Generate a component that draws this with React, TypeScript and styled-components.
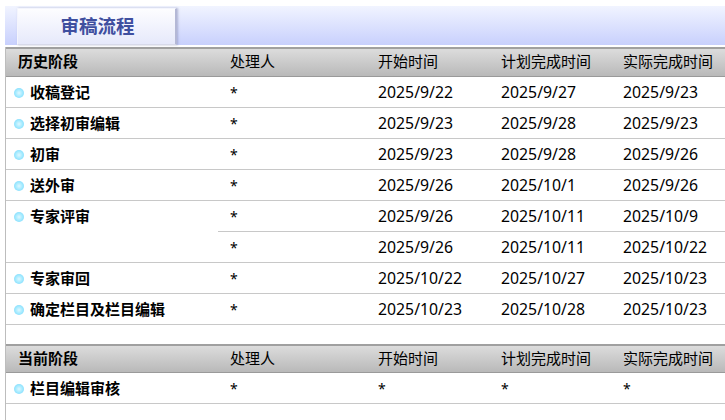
import styled, { createGlobalStyle } from 'styled-components';

const GlobalStyle = createGlobalStyle`
    html, body {
        margin: 0;
        padding: 0;
        background: #fff;
        overflow: hidden;
    }
    body {
        font-family: "Noto Sans", "Noto Sans CJK SC", sans-serif;
        font-size: 15px;
        color: #000;
    }
`;

const Page = styled.div`
    width: 725px;
    height: 420px;
    padding: 6px 0 0 5px;
    box-sizing: border-box;
    overflow: hidden;
`;

const TabBar = styled.div`
    height: 39px;
    padding-left: 12px;
    display: flex;
    align-items: flex-end;
    background: linear-gradient(#f1f4ff, #c8d0fd);
`;

const Tab = styled.div`
    width: 160px;
    height: 37px;
    box-sizing: border-box;
    padding: 0 0 3px 2px;
    display: flex;
    align-items: center;
    justify-content: center;
    background: linear-gradient(#fdfdff, #e6e9fb);
    border: 1px solid #f4f5fd;
    border-right: 2px solid #b4b8d6;
    border-bottom: 1px solid #d8daea;
    box-shadow: 1px 0 2px rgba(120, 125, 170, 0.5);
    font-size: 18.5px;
    font-weight: 700;
    color: #3f4f9f;
`;

const Body = styled.div`
    margin-top: 2px;
    height: 373px;
    border-left: 1px solid #bdbdbd;
`;

const Table = styled.table`
    width: 720px;
    table-layout: fixed;
    border-collapse: separate;
    border-spacing: 0;
`;

const HeadStage = styled.th<{ $height: number }>`
    height: ${(p) => p.$height}px;
    box-sizing: border-box;
    padding: 0 0 4px 12px;
    text-align: left;
    font-size: 15px;
    font-weight: 700;
    background: linear-gradient(#dcdcdc, #b9b9b9);
    border-top: 2px solid #a0a0a0;
    border-bottom: 1px solid #9a9a9a;
`;

const HeadCell = styled(HeadStage)`
    font-weight: 400;
    white-space: nowrap;
`;

const Stage = styled.td`
    box-sizing: border-box;
    padding: 0 0 0 8px;
    border-bottom: 1px solid #c8c8c8;
    vertical-align: top;
    line-height: 30px;
    font-weight: 700;
    white-space: nowrap;
`;

const Cell = styled.td`
    height: 31px;
    box-sizing: border-box;
    padding: 0 0 1px 12px;
    border-bottom: 1px solid #c8c8c8;
    font-size: 15.8px;
    white-space: nowrap;
`;

const Star = styled(Cell)`
    font-size: 14px;
    padding-bottom: 0;
`;

const Dot = styled.span`
    display: inline-block;
    width: 10px;
    height: 10px;
    margin-right: 6px;
    border-radius: 50%;
    vertical-align: 0;
    background: radial-gradient(circle, #dff8ff 0%, #9ce8ff 55%, #74cff8 100%);
`;

const Gap = styled.div`
    height: 19px;
`;

const columns = ['处理人', '开始时间', '计划完成时间', '实际完成时间'];

type Group = { stage: string; rows: string[][] };

const history: Group[] = [
    { stage: '收稿登记', rows: [['2025/9/22', '2025/9/27', '2025/9/23']] },
    { stage: '选择初审编辑', rows: [['2025/9/23', '2025/9/28', '2025/9/23']] },
    { stage: '初审', rows: [['2025/9/23', '2025/9/28', '2025/9/26']] },
    { stage: '送外审', rows: [['2025/9/26', '2025/10/1', '2025/9/26']] },
    {
        stage: '专家评审',
        rows: [
            ['2025/9/26', '2025/10/11', '2025/10/9'],
            ['2025/9/26', '2025/10/11', '2025/10/22'],
        ],
    },
    { stage: '专家审回', rows: [['2025/10/22', '2025/10/27', '2025/10/23']] },
    { stage: '确定栏目及栏目编辑', rows: [['2025/10/23', '2025/10/28', '2025/10/23']] },
];

const current: Group[] = [{ stage: '栏目编辑审核', rows: [['*', '*', '*']] }];

const StageTable = ({ title, groups, headHeight }: { title: string; groups: Group[]; headHeight: number }) => (
    <Table>
        <colgroup>
            <col width={212} />
            <col width={148} />
            <col width={123} />
            <col width={122} />
            <col width={115} />
        </colgroup>
        <thead>
            <tr>
                <HeadStage $height={headHeight}>{title}</HeadStage>
                {columns.map((c) => (
                    <HeadCell key={c} $height={headHeight}>
                        {c}
                    </HeadCell>
                ))}
            </tr>
        </thead>
        <tbody>
            {groups.map((g) =>
                g.rows.map((r, i) => (
                    <tr key={g.stage + i}>
                        {i === 0 && (
                            <Stage rowSpan={g.rows.length}>
                                <Dot />
                                {g.stage}
                            </Stage>
                        )}
                        <Star>*</Star>
                        {r.map((v, j) =>
                            v === '*' ? <Star key={j}>{v}</Star> : <Cell key={j}>{v}</Cell>
                        )}
                    </tr>
                ))
            )}
        </tbody>
    </Table>
);

const App = () => (
    <Page>
        <GlobalStyle />
        <TabBar>
            <Tab>审稿流程</Tab>
        </TabBar>
        <Body>
            <StageTable title="历史阶段" groups={history} headHeight={30} />
            <Gap />
            <StageTable title="当前阶段" groups={current} headHeight={29} />
        </Body>
    </Page>
);

export default App;
